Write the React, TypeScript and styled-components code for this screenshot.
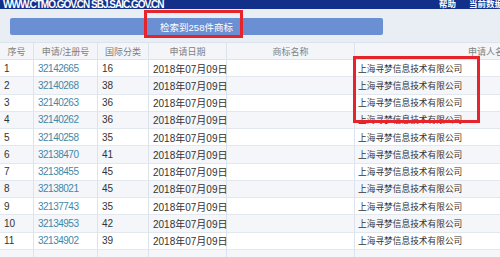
import React from "react";
import styled, { createGlobalStyle } from "styled-components";

const GlobalStyle = createGlobalStyle`
  body {
    margin: 0;
    background: #ffffff;
    font-family: "Liberation Sans", "Noto Sans CJK SC", sans-serif;
  }
`;

const Page = styled.div`
  position: relative;
  width: 500px;
  height: 257px;
  overflow: hidden;
  background: #ffffff;
`;

const TopBar = styled.div`
  display: flex;
  height: 9px;
  background: #12308a;
  color: #ffffff;
  overflow: hidden;
  white-space: nowrap;
`;

const SiteName = styled.span`
  padding-left: 3px;
  font-size: 10px;
  line-height: 9px;
  font-weight: bold;
  letter-spacing: -1px;
`;

const NavLinks = styled.div`
  display: flex;
  gap: 13px;
  margin-left: auto;
  width: 61px;
  font-size: 8.5px;
  line-height: 9px;
  font-weight: bold;
`;

const SearchArea = styled.div`
  padding: 9px 0 7px 10px;
  background: #e9eef5;
`;

const ResultBar = styled.div`
  display: flex;
  align-items: center;
  justify-content: center;
  width: 373px;
  height: 17px;
  border-radius: 2px;
  background: #6a8fd2;
  color: #ffffff;
  font-size: 9.5px;
`;

const Grid = styled.div`
  display: grid;
  grid-template-columns: 34px 64px 51px 78px 128px 272px;
  width: 627px;
`;

const HeadCell = styled.div`
  display: flex;
  align-items: center;
  justify-content: center;
  height: 18px;
  box-sizing: border-box;
  border-top: 1px solid #dde3ec;
  border-right: 1px solid #dde3ec;
  border-bottom: 1px solid #dde3ec;
  background: #f3f5f9;
  color: #808080;
  font-size: 9px;
`;

const Cell = styled.div<{ $shade: boolean; $kind?: "link" | "company" }>`
  display: flex;
  align-items: center;
  height: 17.25px;
  box-sizing: border-box;
  padding-left: ${(p) => (p.$kind === "company" ? "3px" : "4px")};
  border-right: 1px solid #dde3ec;
  border-bottom: 1px solid #e3e7ee;
  background: ${(p) => (p.$shade ? "#f4f6fa" : "#ffffff")};
  color: ${(p) => (p.$kind === "link" ? "#3f88a9" : "#333333")};
  font-size: ${(p) => (p.$kind === "company" ? "8.7px" : "10px")};
  letter-spacing: ${(p) => (p.$kind === "link" ? "-0.5px" : "0")};
  white-space: nowrap;
`;

const Mark = styled.div<{ $left: number; $top: number; $width: number; $height: number }>`
  position: absolute;
  left: ${(p) => p.$left}px;
  top: ${(p) => p.$top}px;
  width: ${(p) => p.$width}px;
  height: ${(p) => p.$height}px;
  box-sizing: border-box;
  border: 3px solid #e5242b;
  pointer-events: none;
`;

const headers = ["序号", "申请/注册号", "国际分类", "申请日期", "商标名称", "申请人名称"];

const rows = [
  ["32142665", "16"],
  ["32140268", "38"],
  ["32140263", "36"],
  ["32140262", "36"],
  ["32140258", "35"],
  ["32138470", "41"],
  ["32138455", "45"],
  ["32138021", "45"],
  ["32137743", "35"],
  ["32134953", "42"],
  ["32134902", "39"],
];

const company = "上海寻梦信息技术有限公司";

export default function App() {
  return (
    <>
      <GlobalStyle />
      <Page>
        <TopBar>
          <SiteName>WWW.CTMO.GOV.CN SBJ.SAIC.GOV.CN</SiteName>
          <NavLinks>
            <span>帮助</span>
            <span>当前数据状态</span>
          </NavLinks>
        </TopBar>
        <SearchArea>
          <ResultBar>检索到258件商标</ResultBar>
        </SearchArea>
        <Grid>
          {headers.map((h) => (
            <HeadCell key={h}>{h}</HeadCell>
          ))}
          {rows.map(([no, cls], i) => {
            const shade = i % 2 === 1;
            return (
              <React.Fragment key={no}>
                <Cell $shade={shade}>{i + 1}</Cell>
                <Cell $shade={shade} $kind="link">{no}</Cell>
                <Cell $shade={shade}>{cls}</Cell>
                <Cell $shade={shade}>2018年07月09日</Cell>
                <Cell $shade={shade} />
                <Cell $shade={shade} $kind="company">{company}</Cell>
              </React.Fragment>
            );
          })}
          {headers.map((h) => (
            <Cell key={"last-" + h} $shade />
          ))}
        </Grid>
        <Mark $left={144} $top={10} $width={99} $height={28} />
        <Mark $left={353} $top={56} $width={127} $height={67} />
      </Page>
    </>
  );
}
